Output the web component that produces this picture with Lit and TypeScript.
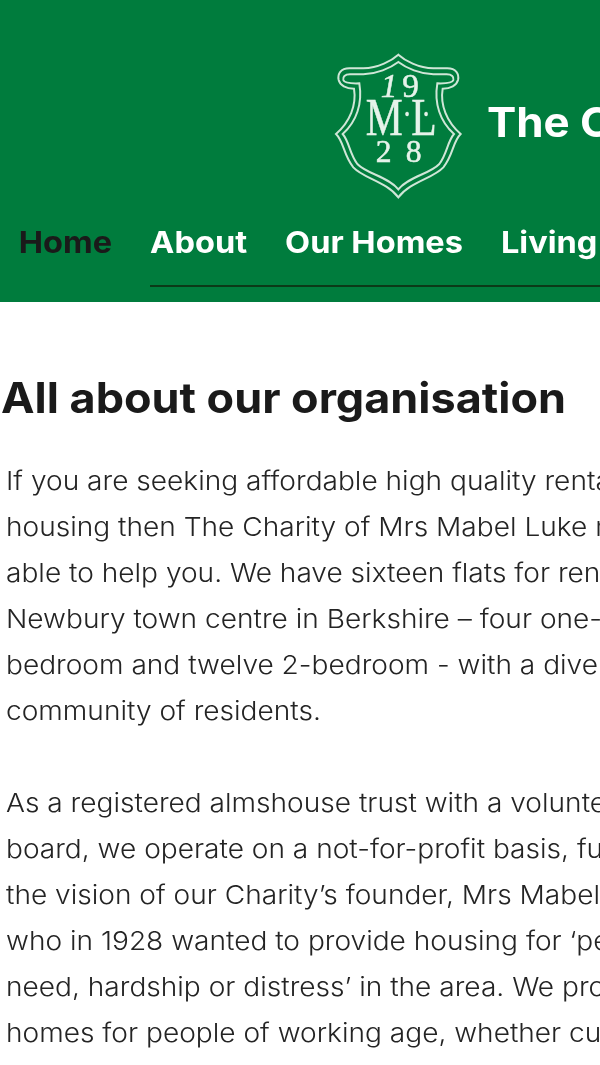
import { LitElement, html, css } from "lit";
import { customElement } from "lit/decorators.js";

const para1 = [
  "If you are seeking affordable high quality rental",
  "housing then The Charity of Mrs Mabel Luke may be",
  "able to help you. We have sixteen flats for rent in",
  "Newbury town centre in Berkshire – four one-",
  "bedroom and twelve 2-bedroom - with a diverse",
  "community of residents.",
];
const para2 = [
  "As a registered almshouse trust with a volunteer",
  "board, we operate on a not-for-profit basis, fulfilling",
  "the vision of our Charity’s founder, Mrs Mabel Luke,",
  "who in 1928 wanted to provide housing for ‘people in",
  "need, hardship or distress’ in the area. We provide",
  "homes for people of working age, whether currently",
];

@customElement("app-root")
export class AppRoot extends LitElement {
  static styles = css`
    :host { display: block; width: 600px; height: 1065px; overflow: hidden; background: #fff; font-family: Inter, "Liberation Sans", sans-serif; color: #1a1a1a; }
    .header { background: #007c3d; height: 302px; display: flex; flex-direction: column; overflow: hidden; }
    .brand { display: flex; align-items: center; height: 162px; padding: 44px 0 0 320px; flex: none; white-space: nowrap; }
    .logo { width: 160px; height: 170px; flex: none; display: block; filter: blur(0.4px); }
    .org { margin-left: 7px; font-size: 41px; font-weight: 700; color: #fff; margin-top: -6px; transform: scaleX(1.07); transform-origin: left center; }
    .nav { display: flex; gap: 35px; padding: 0 0 0 17.3px; white-space: nowrap; font-size: 30px; font-weight: 700; line-height: 72px; color: #fff; transform: scaleX(1.085); transform-origin: left center; }
    .nav .current { color: #1a1a1a; }
    .sub { margin-left: 150px; height: 2px; background: #0b3a18; margin-top: 7px; flex: none; }
    .main { padding: 70px 0 0 6px; white-space: nowrap; overflow: hidden; }
    h1 { margin: 0 0 34px -5px; font-size: 42px; line-height: 52px; font-weight: 700; transform: scaleX(1.07); transform-origin: left center; }
    p { margin: 0 0 46px; font-size: 26px; line-height: 46px; font-weight: 340; color: #242424; transform: scaleX(1.08); transform-origin: left center; }
    .line { display: block; }
    svg text { fill: #e6f3ea; stroke: #e6f3ea; stroke-width: 1.5; font-family: "Liberation Serif", serif; }
  `;
  render() {
    return html`
      <div class="header">
        <div class="brand">
          <svg class="logo" viewBox="0 0 480 510" fill="none" stroke="#cfe6d7">
            <path stroke-width="6" d="M235 44C215 62 175 84 130 85L88 85C62 85 52 102 56 120C60 136 78 146 102 146C110 195 90 245 48 282C72 305 70 345 100 382C130 415 200 425 235 472C270 425 340 415 370 382C400 345 398 305 422 282C380 245 360 195 368 146C392 146 410 136 414 120C418 102 408 85 382 85L340 85C295 84 255 62 235 44Z"/>
            <path stroke-width="6" d="M235 66C210 85 170 102 130 103L90 103C74 103 68 110 70 120C72 128 85 131 118 130C128 190 110 245 68 282C88 305 88 340 112 372C140 402 205 410 235 448C265 410 330 402 358 372C382 340 382 305 402 282C360 245 342 190 352 130C385 131 398 128 400 120C402 110 396 103 380 103L340 103C300 102 260 85 235 66Z"/>
            <text x="182" y="170" font-size="100"><tspan font-style="italic" dx="0">1</tspan><tspan dx="15">9</tspan></text>
            <text transform="translate(137 285) scale(.78 1)" font-size="160">M<tspan font-size="100" dy="-30">·</tspan><tspan dy="30">L</tspan><tspan font-size="100" dx="-58" dy="-30">·</tspan></text>
            <text x="167" y="366" font-size="95">2<tspan dx="43">8</tspan></text>
          </svg>
          <div class="org">The Charity of Mrs Mabel Luke</div>
        </div>
        <div class="nav">
          <span class="current">Home</span><span>About</span><span>Our Homes</span><span>Living here</span>
        </div>
        <div class="sub"></div>
      </div>
      <div class="main">
        <h1>All about our organisation</h1>
        <p>${para1.map((l) => html`<span class="line">${l}</span>`)}</p>
        <p>${para2.map((l) => html`<span class="line">${l}</span>`)}</p>
      </div>
    `;
  }
}
